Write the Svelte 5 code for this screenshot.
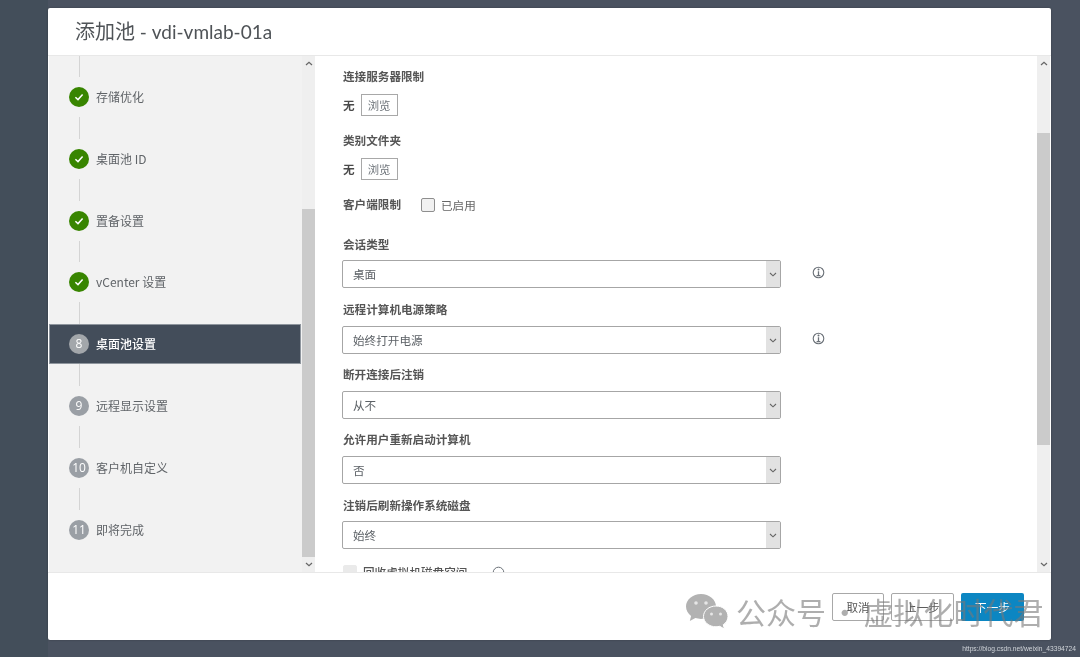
<script>
  const done = ['存储优化', '桌面池 ID', '置备设置', 'vCenter 设置'];
  const todo = [
    { n: 8, label: '桌面池设置', active: true },
    { n: 9, label: '远程显示设置' },
    { n: 10, label: '客户机自定义' },
    { n: 11, label: '即将完成' }
  ];
  const selects = [
    { label: '会话类型', value: '桌面', info: true },
    { label: '远程计算机电源策略', value: '始终打开电源', info: true },
    { label: '断开连接后注销', value: '从不' },
    { label: '允许用户重新启动计算机', value: '否' },
    { label: '注销后刷新操作系统磁盘', value: '始终' }
  ];
</script>

<div class="page">
  <div class="modal">
    <header class="head"><h1><span class="cjk">添加池</span> - vdi-vmlab-01a</h1></header>
    <div class="body">
      <nav class="nav">
        <div class="steps">
          <div class="line first"></div>
          {#each done as s}
            <div class="step">
              <span class="dot ok">
                <svg width="12" height="12" viewBox="0 0 12 12"><path d="M2.4 6.300 5 8.600 9.600 3.600" fill="none" stroke="#fff" stroke-width="1.500"/></svg>
              </span>
              <span class="name">{s}</span>
            </div>
            <div class="line"></div>
          {/each}
          {#each todo as t, i}
            <div class="step" class:active={t.active}>
              <span class="dot">{t.n}</span>
              <span class="name">{t.label}</span>
            </div>
            {#if i < todo.length - 1}<div class="line"></div>{/if}
          {/each}
        </div>
        <div class="bar">
          <svg class="up" width="8" height="5" viewBox="0 0 8 5"><path d="M1 4 4 1.200 7 4" fill="none" stroke="#666" stroke-width="1.200"/></svg>
          <div class="track navtrack"><div class="thumb navthumb"></div></div>
          <svg class="down" width="8" height="5" viewBox="0 0 8 5"><path d="M1 1 4 3.800 7 1" fill="none" stroke="#666" stroke-width="1.200"/></svg>
        </div>
      </nav>
      <section class="content">
        <div class="form">
          <div class="label">连接服务器限制</div>
          <div class="browse"><b>无</b><span class="btn">浏览</span></div>
          <div class="label second">类别文件夹</div>
          <div class="browse"><b>无</b><span class="btn">浏览</span></div>
          <div class="client">
            <span class="label">客户端限制</span>
            <span class="box"></span>
            <span class="enabled">已启用</span>
          </div>
          {#each selects as s, i}
            <div class="label sel-label" class:firstsel={i === 0} class:tight={i === 2 || i === 3}>{s.label}</div>
            <div class="row" class:snug={i === 0 || i === 4}>
              <div class="select">
                <span class="val">{s.value}</span>
                <span class="arrow">
                  <svg width="8" height="5" viewBox="0 0 8 5"><path d="M1 1 4 3.800 7 1" fill="none" stroke="#666" stroke-width="1.100"/></svg>
                </span>
              </div>
              {#if s.info}
                <svg class="info" width="13" height="13" viewBox="0 0 13 13">
                  <circle cx="6.500" cy="6.500" r="5.300" fill="none" stroke="#6b7178" stroke-width="1.100"/>
                  <path d="M6.500 5.200V9.400M4.600 9.700H8.400" fill="none" stroke="#6b7178" stroke-width="1.300"/>
                  <circle cx="6.500" cy="3.600" r="1" fill="#6b7178"/>
                </svg>
              {/if}
            </div>
          {/each}
          <div class="reclaim">
            <span class="box off"></span>
            <span class="label">回收虚拟机磁盘空间</span>
            <svg class="info" width="13" height="13" viewBox="0 0 13 13">
              <circle cx="6.500" cy="6.500" r="5.300" fill="none" stroke="#6b7178" stroke-width="1"/>
            </svg>
          </div>
        </div>
        <div class="bar">
          <svg class="up" width="8" height="5" viewBox="0 0 8 5"><path d="M1 4 4 1.200 7 4" fill="none" stroke="#666" stroke-width="1.200"/></svg>
          <div class="track maintrack"><div class="thumb mainthumb"></div></div>
          <svg class="down" width="8" height="5" viewBox="0 0 8 5"><path d="M1 1 4 3.800 7 1" fill="none" stroke="#666" stroke-width="1.200"/></svg>
        </div>
      </section>
    </div>
    <footer class="foot">
      <span class="fbtn">取消</span>
      <span class="fbtn prev">上一步</span>
      <span class="fbtn next">下一步</span>
    </footer>
  </div>

  <div class="mark">
    <svg width="42" height="35" viewBox="0 0 42 35">
      <path d="M15 0C6.700 0 0 5.600 0 12.600c0 3.800 2 7.200 5.100 9.500L3.800 27l5.600-2.900c1.700.5 3.600.8 5.600.8 8.300 0 15-5.600 15-12.300C30 5.600 23.300 0 15 0Z" fill="#b2b2b2"/>
      <circle cx="10" cy="9" r="1.800" fill="#e6e6e6"/>
      <circle cx="20" cy="9" r="1.800" fill="#e6e6e6"/>
      <path d="M30 12C23.100 12 17.500 16.600 17.500 22.400S23.100 32.800 30 32.800c1.300 0 2.500-.2 3.700-.5l4.700 2.700-1.100-4.300c2.900-1.900 4.700-4.800 4.700-8.300C42 16.600 36.900 12 30 12Z" fill="#b2b2b2" stroke="#fff" stroke-width="1"/>
      <circle cx="25.500" cy="20" r="1.500" fill="#e6e6e6"/>
      <circle cx="34.500" cy="20" r="1.500" fill="#e6e6e6"/>
    </svg>
    <span class="marktext">公众号 · 虚拟化时代君</span>
  </div>
  <div class="url">https://blog.csdn.net/weixin_43394724</div>
</div>

<style>
  :global(body) {
    margin: 0;
    background: #4a5260;
  }
  .page {
    position: relative;
    width: 1080px;
    height: 657px;
    overflow: hidden;
    box-sizing: border-box;
    padding: 8px 29px 17px 48px;
    background: linear-gradient(90deg, #434e5a 0 48px, #4a5260 48px);
    font-family: "Noto Sans CJK SC", Lato, sans-serif;
    color: #565656;
    filter: blur(0.35px);
  }
  .modal {
    display: flex;
    flex-direction: column;
    height: 632px;
    background: #fff;
    border-radius: 2px;
    box-shadow: 0 0 2px rgba(0, 0, 0, .3);
  }
  .head {
    height: 48px;
    flex: none;
    box-sizing: border-box;
    padding: 8px 0 0 27px;
    border-bottom: 1px solid #e8e8e8;
  }
  h1 {
    margin: 0;
    font: 400 19px/30px Lato, "Noto Sans CJK SC", sans-serif;
    color: #4f5357;
  }
  .cjk {
    font-size: 20px;
  }
  .body {
    flex: none;
    height: 516px;
    display: flex;
    border-bottom: 1px solid #e8e8e8;
  }
  .nav {
    width: 266px;
    margin-left: 1px;
    flex: none;
    display: flex;
    background: #f2f2f2;
  }
  .steps {
    width: 253px;
    flex: none;
    overflow: hidden;
  }
  .step {
    height: 40px;
    display: flex;
    align-items: center;
    gap: 7px;
    padding-left: 20px;
    box-sizing: border-box;
    font-size: 12px;
    color: #606468;
  }
  .name {
    margin-top: -1px;
  }
  .step.active {
    background: #434d5a;
    color: #fff;
    font-weight: 500;
    border: 1px solid #8e959d;
    padding-left: 19px;
    margin-right: 1px;
  }
  .dot {
    width: 20px;
    height: 20px;
    border-radius: 50%;
    background: #9a9fa5;
    color: #fff;
    display: flex;
    align-items: center;
    justify-content: center;
    font: 400 12px/1 "Open Sans", sans-serif;
    flex: none;
  }
  .active .dot {
    background: #a3a7ab;
  }
  .dot.ok {
    background: #388500;
  }
  .line {
    width: 1px;
    height: 21.800px;
    margin-left: 30px;
    background: #d4d4d4;
  }
  .line.first {
    height: 21px;
  }
  .bar {
    width: 13px;
    flex: none;
    background: #efefef;
    display: flex;
    flex-direction: column;
    align-items: center;
  }
  .bar svg {
    flex: none;
  }
  .up {
    margin-top: 5px;
  }
  .down {
    margin-bottom: 5px;
  }
  .track {
    flex: 1;
    width: 100%;
    margin: 5px 0;
    display: flex;
    flex-direction: column;
  }
  .navtrack {
    padding-top: 138px;
  }
  .maintrack {
    padding-top: 62px;
  }
  .thumb {
    background: #cbcbcb;
  }
  .navthumb {
    height: 348px;
  }
  .mainthumb {
    height: 312px;
  }
  .content {
    flex: 1;
    display: flex;
    min-width: 0;
    padding-right: 1px;
  }
  .form {
    flex: 1;
    overflow: hidden;
    padding: 12px 0 0 27px;
    box-sizing: border-box;
  }
  .label {
    font-size: 11.600px;
    line-height: 16px;
    font-weight: 700;
    color: #565656;
    padding-left: 1px;
  }
  .browse {
    display: flex;
    align-items: center;
    gap: 6px;
    height: 22px;
    margin-top: 10px;
    padding-left: 1px;
  }
  .browse b {
    font-size: 11.600px;
    color: #4a4a4a;
  }
  .btn {
    width: 35px;
    height: 20px;
    border: 1px solid #a8a8a8;
    display: flex;
    align-items: center;
    justify-content: center;
    font-size: 11.400px;
    color: #6c7278;
  }
  .second {
    margin-top: 16px;
  }
  .client {
    display: flex;
    align-items: center;
    margin-top: 14px;
    height: 22px;
  }
  .client .label {
    width: 78px;
    margin-top: -3px;
  }
  .box {
    width: 12px;
    height: 12px;
    border: 1px solid #8e8e8e;
    border-radius: 2px;
    background: #f1f1f1;
    flex: none;
  }
  .enabled {
    margin-left: 6px;
    font-size: 11.600px;
    color: #666;
  }
  .sel-label {
    margin-top: 13px;
  }
  .sel-label.tight {
    margin-top: 12px;
  }
  .sel-label.firstsel {
    margin-top: 20px;
  }
  .row {
    display: flex;
    align-items: center;
    margin-top: 9px;
  }
  .row.snug {
    margin-top: 8px;
  }
  .select {
    width: 439px;
    height: 28px;
    box-sizing: border-box;
    border: 1px solid #a6a6a6;
    border-radius: 2px;
    display: flex;
    justify-content: space-between;
    align-items: center;
    padding-left: 10px;
    font-size: 11.600px;
    color: #5c6166;
  }
  .arrow {
    width: 14px;
    height: 100%;
    background: #e2e2e2;
    display: flex;
    align-items: center;
    justify-content: center;
  }
  .info {
    margin: -3px 0 0 31px;
  }
  .reclaim {
    display: flex;
    align-items: center;
    margin-top: 15px;
    padding-left: 1px;
  }
  .box.off {
    background: #eaeaea;
    border-color: #eaeaea;
    margin-right: 5px;
  }
  .reclaim .label {
    font-weight: 500;
  }
  .reclaim .info {
    margin: 0 0 0 25px;
  }
  .foot {
    flex: 1;
    display: flex;
    justify-content: flex-end;
    gap: 7px;
    padding: 20px 27px 0 0;
  }
  .fbtn {
    width: 50px;
    height: 26px;
    border: 1px solid #a8a8a8;
    border-radius: 2px;
    display: flex;
    align-items: center;
    justify-content: center;
    font-size: 11.600px;
    color: #555;
  }
  .prev {
    width: 61px;
  }
  .next {
    width: 63px;
    height: 28px;
    background: #0c86c2;
    border: 0;
    color: #fff;
  }
  .mark {
    position: absolute;
    left: 686px;
    top: 594px;
    display: flex;
    align-items: center;
    gap: 8px;
    font-size: 30px;
    line-height: 36px;
    word-spacing: -3px;
    color: rgba(120, 120, 120, .6);
    white-space: nowrap;
  }
  .marktext {
    margin-top: -2px;
  }
  .url {
    position: absolute;
    right: 4px;
    top: 643px;
    font: 6.700px/11px "Liberation Sans", sans-serif;
    color: #d0d4d9;
  }
</style>
